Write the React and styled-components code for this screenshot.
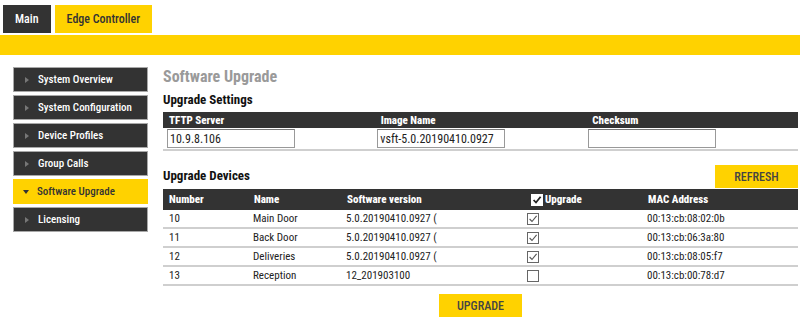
import styled, { createGlobalStyle } from "styled-components";

const GlobalStyle = createGlobalStyle`
  body {
    margin: 0;
    background: #fff;
    font-family: Roboto, "Liberation Sans", sans-serif;
    font-stretch: condensed;
    color: #333;
  }
`;

const YELLOW = "#ffd200";
const DARK = "#333333";

const menu = [
  "System Overview",
  "System Configuration",
  "Device Profiles",
  "Group Calls",
  "Software Upgrade",
  "Licensing",
];

const devices = [
  { num: "10", name: "Main Door", ver: "5.0.20190410.0927 (", up: true, mac: "00:13:cb:08:02:0b" },
  { num: "11", name: "Back Door", ver: "5.0.20190410.0927 (", up: true, mac: "00:13:cb:06:3a:80" },
  { num: "12", name: "Deliveries", ver: "5.0.20190410.0927 (", up: true, mac: "00:13:cb:08:05:f7" },
  { num: "13", name: "Reception", ver: "12_201903100", up: false, mac: "00:13:cb:00:78:d7" },
];

const cols = ["85px", "93px", "184px", "117px", "1fr"];

const App = () => {
  return (
    <Page>
      <GlobalStyle />
      <Tabs>
        <Tab>Main</Tab>
        <Tab active>Edge Controller</Tab>
      </Tabs>
      <Banner />
      <Body>
        <Sidebar>
          {menu.map((m) => (
            <MenuItem key={m} active={m === "Software Upgrade"}>
              <Arrow active={m === "Software Upgrade"} />
              {m}
            </MenuItem>
          ))}
        </Sidebar>

        <Content>
          <Title>Software Upgrade</Title>
          <Section>Upgrade Settings</Section>

          <SettingsHead>
            <span>TFTP Server</span>
            <span>Image Name</span>
            <span>Checksum</span>
          </SettingsHead>
          <SettingsRow>
            <Field defaultValue="10.9.8.106" />
            <Field defaultValue="vsft-5.0.20190410.0927" />
            <Field defaultValue="" />
          </SettingsRow>

          <DevicesBar>
            <Section>Upgrade Devices</Section>
            <Button>REFRESH</Button>
          </DevicesBar>

          <DevHead>
            <Cell>Number</Cell>
            <Cell>Name</Cell>
            <Cell>Software version</Cell>
            <Cell gap="2px">
              <Check checked light />
              Upgrade
            </Cell>
            <Cell>MAC Address</Cell>
          </DevHead>
          {devices.map((d) => (
            <DevRow key={d.num}>
              <Cell>{d.num}</Cell>
              <Cell pad="5px">{d.name}</Cell>
              <Cell pad="5px">{d.ver}</Cell>
              <Cell pad="2px">
                <Check checked={d.up} />
              </Cell>
              <Cell pad="5px">{d.mac}</Cell>
            </DevRow>
          ))}

          <Footer>
            <Button>UPGRADE</Button>
          </Footer>
        </Content>
      </Body>
    </Page>
  );
};

const Check = ({ checked, light }) => (
  <CheckBox light={light}>
    {checked && (
      <svg width="10" height="10" viewBox="0 0 10 10">
        <path
          d="M1.6 5 L4 7.5 L8.6 1.8"
          fill="none"
          stroke={light ? "#222" : "#555"}
          strokeWidth={light ? 1.8 : 1.1}
        />
      </svg>
    )}
  </CheckBox>
);

const Page = styled.div`
  width: 800px;
  height: 320px;
  overflow: hidden;
`;

const Tabs = styled.div`
  display: flex;
  gap: 4px;
  padding: 5px 0 0 3px;
  height: 28px;
`;

const Tab = styled.div`
  display: flex;
  align-items: center;
  padding: 0 12px;
  font-size: 12px;
  font-weight: 500;
  background: ${(p) => (p.active ? YELLOW : DARK)};
  color: ${(p) => (p.active ? "#333" : "#fff")};
`;

const Banner = styled.div`
  margin-top: 2px;
  height: 20px;
  background: ${YELLOW};
`;

const Body = styled.div`
  display: flex;
  gap: 15px;
  padding: 12px 2px 0 13px;
`;

const Sidebar = styled.div`
  width: 135px;
  flex-shrink: 0;
  display: flex;
  flex-direction: column;
  gap: 3px;
`;

const MenuItem = styled.div`
  height: 25px;
  box-sizing: border-box;
  display: flex;
  align-items: center;
  padding-left: 10px;
  font-size: 11px;
  font-weight: 500;
  background: ${(p) => (p.active ? YELLOW : DARK)};
  color: ${(p) => (p.active ? "#333" : "#fff")};
  border: 1px solid ${(p) => (p.active ? YELLOW : "#a8a8a8")};
`;

const Arrow = styled.span`
  width: 0;
  height: 0;
  margin-right: 8px;
  ${(p) =>
    p.active
      ? `border-left: 3.5px solid transparent;
         border-right: 3.5px solid transparent;
         border-top: 4px solid #333;
         margin-left: -1px;`
      : `border-top: 3.5px solid transparent;
         border-bottom: 3.5px solid transparent;
         border-left: 4px solid #777;
         margin-left: 1px;
         margin-right: 9px;`}
`;

const Content = styled.div`
  flex: 1;
  display: flex;
  flex-direction: column;
`;

const Title = styled.h1`
  margin: 0;
  font-size: 16px;
  line-height: 19px;
  font-weight: 700;
  color: #9a9a9a;
`;

const Section = styled.h2`
  margin: 6px 0 4px;
  font-size: 13px;
  line-height: 16px;
  font-weight: 700;
  color: #111;
`;

const SettingsHead = styled.div`
  display: grid;
  grid-template-columns: 1fr 1fr 1fr;
  height: 16px;
  align-items: center;
  background: ${DARK};
  color: #fff;
  font-size: 11px;
  font-weight: 800;
  span {
    padding-left: 6px;
  }
`;

const SettingsRow = styled.div`
  display: grid;
  grid-template-columns: 1fr 1fr 1fr;
  align-items: center;
  height: 23px;
  border-bottom: 2px solid #cfcfcf;
  padding-left: 4px;
  box-sizing: border-box;
`;

const Field = styled.input`
  width: 128px;
  height: 19px;
  box-sizing: border-box;
  border: 1px solid #999;
  border-top-color: #777;
  padding: 0 2px;
  font-family: Roboto, "Liberation Sans", sans-serif;
  font-stretch: condensed;
  font-size: 12px;
  color: #222;
  outline: none;
`;

const DevicesBar = styled.div`
  display: flex;
  justify-content: space-between;
  align-items: flex-start;
  margin-top: 14px;
  h2 {
    margin: 3px 0 0;
  }
`;

const Button = styled.button`
  width: 83px;
  height: 23px;
  border: 0;
  background: ${YELLOW};
  color: #444;
  font-family: Roboto, "Liberation Sans", sans-serif;
  font-stretch: condensed;
  font-size: 12px;
  font-weight: 500;
  cursor: pointer;
`;

const DevHead = styled.div`
  display: grid;
  grid-template-columns: ${cols.join(" ")};
  height: 21px;
  align-items: center;
  margin-top: 1px;
  background: ${DARK};
  color: #fff;
  font-size: 11px;
  font-weight: 800;
`;

const DevRow = styled.div`
  display: grid;
  grid-template-columns: ${cols.join(" ")};
  height: 19px;
  box-sizing: border-box;
  align-items: center;
  border-bottom: 2px solid #cfcfcf;
  font-size: 11px;
  color: #222;
`;

const Cell = styled.div`
  display: flex;
  align-items: center;
  gap: ${(p) => p.gap || "0"};
  padding-left: ${(p) => p.pad || "6px"};
`;

const CheckBox = styled.span`
  width: 12px;
  height: 12px;
  box-sizing: border-box;
  display: inline-flex;
  align-items: center;
  justify-content: center;
  border: 1px solid ${(p) => (p.light ? "#fff" : "#666")};
  background: #fff;
`;

const Footer = styled.div`
  display: flex;
  justify-content: center;
  margin-top: 8px;
`;

export default App;
